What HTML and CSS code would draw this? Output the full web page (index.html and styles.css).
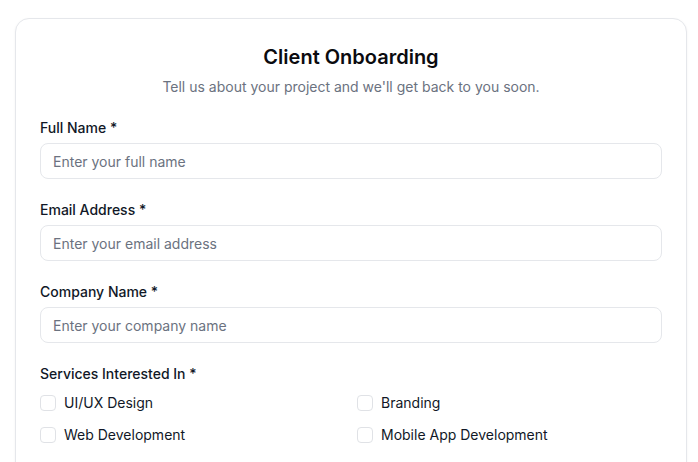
FILE: index.html
```html
<!DOCTYPE html>
<html lang="en">
<head>
<meta charset="utf-8">
<title>Client Onboarding</title>
<link rel="stylesheet" href="styles.css">
</head>
<body>
<main class="card">
  <header class="head">
    <h1 class="title">Client Onboarding</h1>
    <p class="subtitle">Tell us about your project and we'll get back to you soon.</p>
  </header>
  <form class="form">
    <div class="field">
      <label class="label" for="name">Full Name *</label>
      <input class="input" id="name" type="text" placeholder="Enter your full name">
    </div>
    <div class="field">
      <label class="label" for="email">Email Address *</label>
      <input class="input" id="email" type="email" placeholder="Enter your email address">
    </div>
    <div class="field">
      <label class="label" for="company">Company Name *</label>
      <input class="input" id="company" type="text" placeholder="Enter your company name">
    </div>
    <div class="field">
      <span class="label">Services Interested In *</span>
      <div class="checks">
        <label class="check"><input type="checkbox" class="box"><span>UI/UX Design</span></label>
        <label class="check"><input type="checkbox" class="box"><span>Branding</span></label>
        <label class="check"><input type="checkbox" class="box"><span>Web Development</span></label>
        <label class="check"><input type="checkbox" class="box"><span>Mobile App Development</span></label>
      </div>
    </div>
  </form>
</main>
</body>
</html>
```

FILE: styles.css
```css
* { box-sizing: border-box; }
html, body { margin: 0; padding: 0; background: #ffffff; }
body {
  font-family: Inter, "Noto Sans", sans-serif;
  color: #111827;
  padding: 18px 0 0 15px;
}
.card {
  width: 672px;
  background: #fff;
  border: 1px solid #e5e7eb;
  border-radius: 14px;
  box-shadow: 0 1px 3px rgba(0,0,0,0.05);
  padding: 24px 24px 40px;
}
.head { text-align: center; margin-bottom: 21px; }
.title {
  margin: 0;
  font-size: 20px;
  line-height: 28px;
  font-weight: 600;
  color: #0b0b0f;
}
.subtitle {
  margin: 6px 0 0;
  font-size: 14px;
  line-height: 20px;
  color: #6b7280;
}
.form { display: flex; flex-direction: column; gap: 21px; }
.field { display: flex; flex-direction: column; }
.label {
  font-size: 14px;
  line-height: 20px;
  font-weight: 500;
  color: #111827;
  margin-bottom: 5px;
}
.input {
  height: 36px;
  width: 100%;
  border: 1px solid #e5e7eb;
  border-radius: 8px;
  padding: 0 12px;
  font-family: inherit;
  font-size: 14px;
  color: #111827;
  background: #fff;
  outline: none;
}
.input::placeholder { color: #6b7280; }
.checks {
  display: grid;
  grid-template-columns: 1fr 1fr;
  column-gap: 12px;
  row-gap: 12px;
  margin-top: 4px;
}
.check {
  display: flex;
  align-items: center;
  gap: 8px;
  font-size: 14px;
  line-height: 20px;
  color: #111827;
}
.box {
  appearance: none;
  -webkit-appearance: none;
  margin: 0;
  width: 16px;
  height: 16px;
  border: 1px solid #e0e2e6;
  border-radius: 4px;
  background: #fff;
  flex: none;
}
```
